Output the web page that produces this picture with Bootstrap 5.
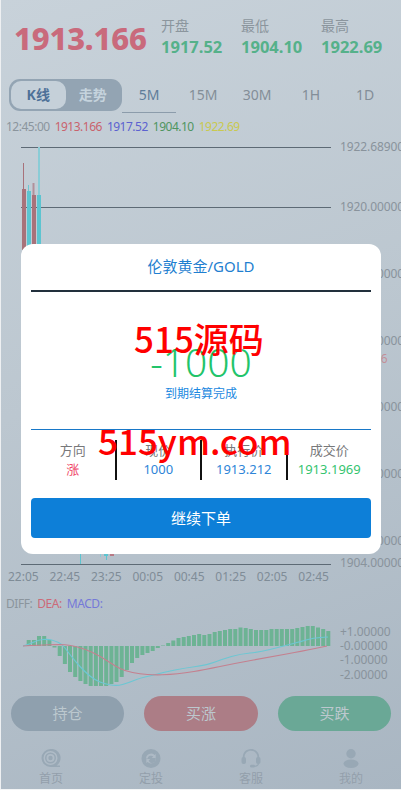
<!DOCTYPE html>
<html lang="en">
<head>
  <meta charset="UTF-8" />
  <title>gold trade</title>
  <meta name="viewport" content="width=device-width, initial-scale=1.0">
  <link href="https://cdn.jsdelivr.net/npm/bootstrap@5.3.0/dist/css/bootstrap.min.css" rel="stylesheet">
  <style>
    body {
      background-color: #f2f4f5;
      font-family: "Noto Sans", "Noto Sans CJK SC", sans-serif;
      overflow: hidden;
    }
    .app {
      width: 401px;
      height: 789px;
      border-left: 1px solid #eef0f2;
      background: linear-gradient(160deg, #c8d2da 0%, #bcc7d0 45%, #a9b6c2 100%);
      overflow: hidden;
    }
    .head { height: 72px; padding: 14px 0 0 13px; }
    .price { width: 147px; color: #c96a7c; font-size: 31px; font-weight: 800; line-height: 48px; letter-spacing: -.2px; }
    .stat { width: 80px; margin-top: 2px; }
    .stat-name { color: #8b959d; font-size: 14px; line-height: 20px; }
    .stat-val { color: #55b18a; font-size: 16.5px; font-weight: 700; line-height: 22px; }
    .tabs-row { height: 34px; margin: 7px 0 0 8px; }
    .toggle { width: 113px; height: 32px; padding: 2px; background: #93a4b3; border-radius: 11px; }
    .toggle span { width: 55px; font-size: 14px; font-weight: 700; line-height: 28px; text-align: center; color: #c5d3dd; }
    .toggle span.on { background: #c5d0d9; color: #4e7198; border-radius: 10px; }
    .tab-k { width: 54px; height: 34px; color: #838e98; font-size: 14px; line-height: 32px; text-align: center; }
    .tab-k.on { color: #5f7d9a; border-bottom: 1px solid #8c9cab; }
    .ohlc { height: 18px; margin: 5px 0 0 5px; font-size: 12px; line-height: 18px; gap: 5px; letter-spacing: -.5px; }
    .c-grey { color: #8b959d; }
    .c-red { color: #c9636d; }
    .c-blue { color: #5c62d0; }
    .c-green { color: #4f9560; }
    .c-yellow { color: #c9c950; }
    .c-dea { color: #cc6a78; }
    .c-macd { color: #7479d8; }
    .kchart { display: block; margin-top: 4px; }
    .kchart text, .mchart text { font-size: 12px; fill: #89939c; letter-spacing: -.1px; }
    .times { height: 18px; padding: 0 72px 0 7px; color: #7f8c97; font-size: 12px; line-height: 18px; }
    .macd-row { height: 18px; margin: 9px 0 0 5px; font-size: 12px; line-height: 18px; gap: 5px; letter-spacing: -.45px; }
    .mchart { display: block; margin-top: 6px; }
    .acts { padding: 5px 10px 0; }
    .act {
      width: 113px;
      height: 35px;
      border: 0;
      border-radius: 18px;
      color: #bcc8ce;
      font-size: 15px;
      line-height: 35px;
      text-align: center;
    }
    .act-a { background: #8fa0ae; }
    .act-b { background: #ac7d86; width: 114px; }
    .act-c { background: #6aa896; }
    .tabbar { padding-top: 18px; }
    .tabbar > div { width: 100px; color: #939fab; font-size: 12px; line-height: 15px; text-align: center; }
    .tabbar svg { display: block; margin: 0 auto 3px; fill: #98a8b5; }
    .dlg {
      position: absolute;
      left: 20px;
      top: 244px;
      width: 360px;
      height: 310px;
      padding: 0 10px;
      border: 0;
      border-radius: 12px;
    }
    .dlg-title { height: 48px; color: #1f7fd0; font-size: 15px; line-height: 45px; text-align: center; border-bottom: 2px solid #22303c; }
    .dlg-mid { height: 138px; border-bottom: 1px solid #1878c8; text-align: center; }
    .dlg-num { padding-top: 48px; color: #22c46a; font-size: 39px; font-weight: 300; line-height: 44px; }
    .dlg-note { color: #1a88e0; font-size: 12px; line-height: 20px; }
    .dlg-stats { height: 50px; padding-top: 10px; }
    .dlg-stats > div { flex: 1; height: 40px; padding-top: 1px; text-align: center; font-size: 13px; line-height: 19px; border-right: 2px solid #111; }
    .dlg-stats > div:last-child { border-right: 0; }
    .lbl { color: #77787a; }
    .v-up { color: #f04a6a; }
    .v-blue { color: #2e85d8; }
    .v-green { color: #35c46f; }
    .btn-go { height: 40px; margin-top: 18px; background: #0d7fd8; border: 0; border-radius: 4px; color: #fff; font-size: 15px; }
    .mark-a, .mark-b { position: absolute; color: #f00; font-family: "Noto Sans CJK SC", sans-serif; font-size: 35px; font-weight: 500; line-height: 44px; white-space: nowrap; }
    .mark-a { left: 133px; top: 316px; }
    .mark-b { left: 97px; top: 418px; }
  </style>
</head>
<body>
  <div class="app position-relative">
    <div class="head d-flex">
      <div class="price">1913.166</div>
      <div class="stat"><div class="stat-name">开盘</div><div class="stat-val">1917.52</div></div>
      <div class="stat"><div class="stat-name">最低</div><div class="stat-val">1904.10</div></div>
      <div class="stat"><div class="stat-name">最高</div><div class="stat-val">1922.69</div></div>
    </div>

    <div class="tabs-row d-flex">
      <div class="toggle d-flex"><span class="on">K线</span><span>走势</span></div>
      <div class="tab-k on">5M</div>
      <div class="tab-k">15M</div>
      <div class="tab-k">30M</div>
      <div class="tab-k">1H</div>
      <div class="tab-k">1D</div>
    </div>

    <div class="ohlc d-flex">
      <span class="c-grey">12:45:00</span>
      <span class="c-red">1913.166</span>
      <span class="c-blue">1917.52</span>
      <span class="c-green">1904.10</span>
      <span class="c-yellow">1922.69</span>
    </div>

    <svg class="kchart" width="400" height="428" viewBox="1 140 400 428">
      <g stroke="#5d6a75" stroke-width="1">
        <line x1="21" x2="331" y1="147.5" y2="147.5"/>
        <line x1="21" x2="331" y1="207.5" y2="207.5"/>
        <line x1="21" x2="331" y1="564.5" y2="564.5"/>
      </g>
      <line x1="23.5" x2="23.5" y1="163" y2="250" stroke="#a8727a" stroke-width="1"/>
      <rect x="22" y="189" width="4" height="61" fill="#a8727a"/>
      <line x1="28.5" x2="28.5" y1="185" y2="250" stroke="#6cc7d0" stroke-width="1"/>
      <rect x="27" y="191" width="4" height="59" fill="#5cc4d0"/>
      <line x1="33.5" x2="33.5" y1="183" y2="250" stroke="#b2909a" stroke-width="2"/>
      <rect x="32" y="195" width="4" height="55" fill="#a8727a"/>
      <line x1="39" x2="39" y1="147" y2="250" stroke="#8accd6" stroke-width="2"/>
      <rect x="37" y="195" width="4" height="55" fill="#5cc4d0"/>
      <line x1="80.5" x2="80.5" y1="550" y2="564" stroke="#5cc4d0" stroke-width="1"/>
      <line x1="100.5" x2="100.5" y1="550" y2="557" stroke="#8accd6" stroke-width="1"/>
      <line x1="106.5" x2="106.5" y1="550" y2="560" stroke="#5cc4d0" stroke-width="1"/>
      <rect x="104" y="550" width="4" height="6" fill="#5cc4d0"/>
      <rect x="110" y="550" width="4" height="6" fill="#b87a86"/>
      <text x="340" y="151">1922.68900</text>
      <text x="340" y="211">1920.00000</text>
      <text x="340" y="278">1917.00000</text>
      <text x="340" y="345">1914.00000</text>
      <text x="337" y="363" style="fill:#c49098">1913.166</text>
      <text x="340" y="411">1911.00000</text>
      <text x="340" y="478">1908.00000</text>
      <text x="340" y="545">1905.00000</text>
      <text x="340" y="567">1904.00000</text>
    </svg>

    <div class="times d-flex justify-content-between">
      <span>22:05</span><span>22:45</span><span>23:25</span><span>00:05</span>
      <span>00:45</span><span>01:25</span><span>02:05</span><span>02:45</span>
    </div>

    <div class="macd-row d-flex">
      <span class="c-grey">DIFF:</span>
      <span class="c-dea">DEA:</span>
      <span class="c-macd">MACD:</span>
    </div>

    <svg class="mchart" id="macd" width="400" height="72" viewBox="1 620 400 72">
      <text x="340" y="636.5">+1.00000</text>
      <text x="340" y="651">-0.00000</text>
      <text x="340" y="665">-1.00000</text>
      <text x="340" y="679.5">-2.00000</text>
    </svg>

    <div class="acts d-flex justify-content-between">
      <div class="act act-a">持仓</div>
      <div class="act act-b">买涨</div>
      <div class="act act-c">买跌</div>
    </div>

    <div class="tabbar d-flex">
      <div>
        <svg width="20" height="19" viewBox="0 0 20 19">
          <path fill-rule="evenodd" d="M9.500 0a9 9 0 1 0 0 18h9.500v-1.600h-3.400A9 9 0 0 0 9.500 0zm0 2a7 7 0 1 1 0 14 7 7 0 0 1 0-14z"/>
          <path fill-rule="evenodd" d="M9.500 3.500a5.500 5.500 0 1 0 0 11 5.500 5.500 0 0 0 0-11zm0 1.500a4 4 0 1 1 0 8 4 4 0 0 1 0-8z"/>
          <circle cx="9.500" cy="9" r="2.200"/>
        </svg>
        首页
      </div>
      <div>
        <svg width="20" height="19" viewBox="0 0 20 19">
          <path fill-rule="evenodd" d="M10 0a9.500 9.500 0 1 0 0 19 9.500 9.500 0 0 0 0-19zM5 9.500a5 5 0 0 1 8.500-3.500l1.200-1v4h-4l1.600-1.400A3.400 3.400 0 0 0 6.600 9.500zm10 0a5 5 0 0 1-8.500 3.500l-1.200 1v-4h4l-1.600 1.400a3.400 3.400 0 0 0 6.700-1.900z"/>
        </svg>
        定投
      </div>
      <div>
        <svg width="20" height="19" viewBox="0 0 20 19">
          <path d="M10 0C5 0 1.800 3.600 1.800 8v1H3.600V8c0-3.500 2.800-6.200 6.400-6.200s6.400 2.700 6.400 6.200v1h1.800V8C18.200 3.600 15 0 10 0z"/>
          <rect x="0.500" y="8" width="4.500" height="7" rx="2"/>
          <rect x="15" y="8" width="4.500" height="7" rx="2"/>
          <path d="M17 14h1.200c0 2.600-2.200 4-5 4v-1.200c2 0 3.800-1 3.800-2.800z"/>
          <rect x="9" y="15.800" width="5" height="2.800" rx="1.400"/>
        </svg>
        客服
      </div>
      <div>
        <svg width="20" height="19" viewBox="0 0 20 19">
          <circle cx="10" cy="4.700" r="4.700"/>
          <ellipse cx="10" cy="14.800" rx="7.500" ry="4.200"/>
        </svg>
        我的
      </div>
    </div>

    <div class="dlg card">
      <div class="dlg-title">伦敦黄金/GOLD</div>
      <div class="dlg-mid">
        <div class="dlg-num">-1000</div>
        <div class="dlg-note">到期结算完成</div>
      </div>
      <div class="dlg-stats d-flex">
        <div><span class="lbl">方向</span><br><span class="v-up">涨</span></div>
        <div><span class="lbl">现价</span><br><span class="v-blue">1000</span></div>
        <div><span class="lbl">执行价</span><br><span class="v-blue">1913.212</span></div>
        <div><span class="lbl">成交价</span><br><span class="v-green">1913.1969</span></div>
      </div>
      <button type="button" class="btn btn-go w-100">继续下单</button>
    </div>

    <div class="mark-a">515源码</div>
    <div class="mark-b">515ym.com</div>
  </div>

  <script>
    // macd bars, height above (+) or below (-) the zero line at y=647
    const bars = [6,6,10,10,6,-1.5,-10,-18,-26,-31,-35,-38,-40,-40,-40,-40,-38,-36,-31,-24,-17,-12,-9,-7,-5,-2,0.5,3,
      5.5,8,9,10,11,12,11,12,14,15,16,17,17,18.5,18,17,16,16,16,17,17,17,17,17,18,19,20,20,18.5,17,15];
    const dif = [[23,647],[30,645],[38,641],[48,640],[55,642],[62,645],[68,653],[75,662],[85,673],[95,681],[105,685],[117,687],[128,684],[140,679],[150,677],[165,673],[185,669],[207,666],[223,660],[240,655],[260,653],[280,648],[303,642],[313,639],[328,638]];
    const dea = [[23,647],[40,646],[60,645.5],[70,646],[85,650],[100,657],[115,667],[125,672],[140,675],[155,676],[170,675.5],[185,674],[203,671],[237,664],[270,658],[303,652],[327,647]];
    // quadratic curve through midpoints so the lines come out smooth
    function smooth(p) {
      let d = `M${p[0][0]} ${p[0][1]}`;
      for (let i = 1; i < p.length - 1; i++) {
        const mx = (p[i][0] + p[i + 1][0]) / 2, my = (p[i][1] + p[i + 1][1]) / 2;
        d += `Q${p[i][0]} ${p[i][1]} ${mx} ${my}`;
      }
      const last = p[p.length - 1];
      return d + `L${last[0]} ${last[1]}`;
    }
    const svg = document.getElementById("macd");
    let out = "";
    bars.forEach((h, i) => {
      const x = (26.7 + i * 5.166).toFixed(1);
      const y = h > 0 ? 647 - h : 647;
      out += `<rect x="${x}" y="${y}" width="4" height="${Math.abs(h)}" fill="#6db394"/>`;
    });
    out += `<path d="${smooth(dif)}" fill="none" stroke="#6cc7d3" stroke-width="1.2"/>`;
    out += `<path d="${smooth(dea)}" fill="none" stroke="#c4808f" stroke-width="1.2"/>`;
    svg.insertAdjacentHTML("beforeend", out);
  </script>
  <script src="https://cdn.jsdelivr.net/npm/bootstrap@5.3.0/dist/js/bootstrap.bundle.min.js"></script>
</body>
</html>
